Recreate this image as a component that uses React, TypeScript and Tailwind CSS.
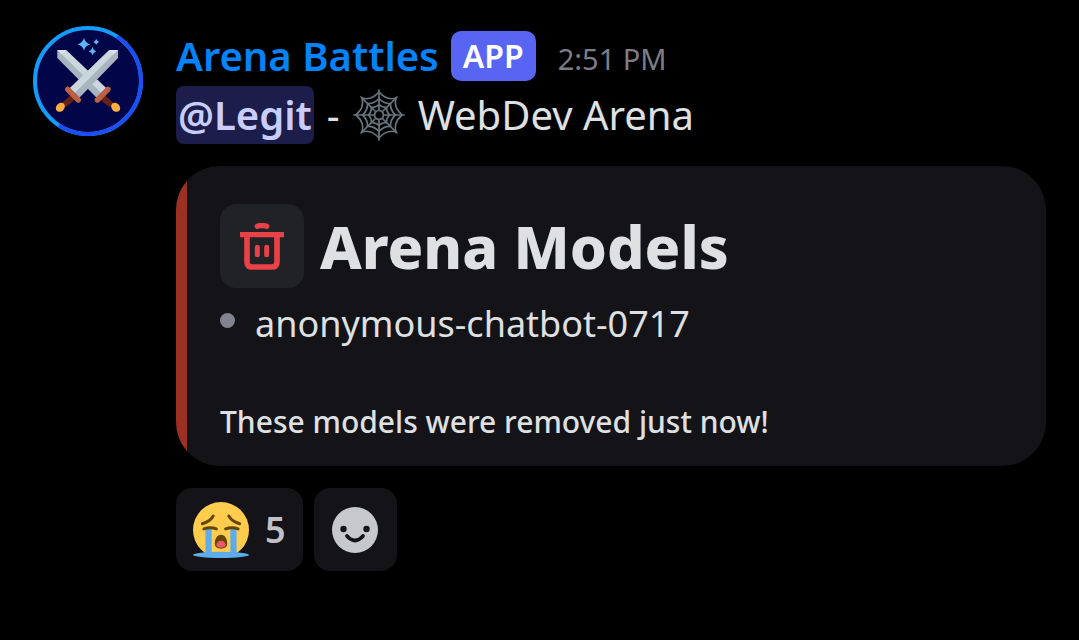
import React from "react";

function Avatar() {
  return (
    <svg viewBox="15 18 330 330" className="size-[110px] shrink-0" role="img" aria-label="Arena Battles avatar">
      <circle cx="180" cy="183" r="159" fill="#020648" stroke="#149cfb" strokeWidth="12" />
      <path d="M267 50A158 158 0 0 1 93 316" fill="none" stroke="#1d4ef5" strokeWidth="12" />
      <g fill="#5db4f8">
        <path d="M168 53Q171 69 187 73Q171 77 168 92Q164 77 148 73Q164 69 168 53Z" />
        <path d="M194 80Q196 91 205 94Q196 97 194 106Q191 97 182 94Q191 91 194 80Z" />
        <path d="M205 57Q207 63 213 66Q207 69 205 74Q202 69 196 66Q202 63 205 57Z" />
      </g>
      <g>
        <path d="M214 237L228 223L257 250L245 262Z" fill="#662113" />
        <path d="M88 90H114L234 204L206 233L88 114Z" fill="#a6b5be" />
        <path d="M114 90L234 204L220 219L98 100L114 90Z" fill="#ccd6dd" />
        <path d="M88 90H114L101 103Z" fill="#dde4e9" />
        <path d="M240 208L208 240" stroke="#be6045" strokeWidth="16" strokeLinecap="round" />
        <ellipse cx="263" cy="262" rx="12" ry="15" transform="rotate(-45 263 262)" fill="#ffac45" />
      </g>
      <g>
        <path d="M144 237L130 223L101 250L113 262Z" fill="#662113" />
        <path d="M270 90H244L126 204L154 233L270 114Z" fill="#a6b5be" />
        <path d="M244 90L126 204L140 219L260 100Z" fill="#ccd6dd" />
        <path d="M270 90H244L257 103Z" fill="#dde4e9" />
        <path d="M119 208L151 240" stroke="#be6045" strokeWidth="16" strokeLinecap="round" />
        <ellipse cx="97" cy="262" rx="12" ry="15" transform="rotate(45 97 262)" fill="#ffac45" />
      </g>
    </svg>
  );
}

function Web() {
  return (
    <svg viewBox="-26 -26 52 52" className="size-[52px] shrink-0" fill="none" stroke="#66757f" strokeWidth="1.700" strokeLinecap="round" role="img" aria-label="Spider web">
      <path d="M0-25V-5M0 5V25M-25 0H-5M5 0H25M-18-18L-4-4M4 4L18 18M18-18L4-4M-4 4L-18 18" />
      <circle r="4.5" />
      <path d="M0-23Q8-14 17-17Q14-8 23 0Q14 8 17 17Q8 14 0 23Q-8 14-17 17Q-14 8-23 0Q-14-8-17-17Q-8-14 0-23Z" />
      <path d="M0-16.500Q5-11 11.500-11.500Q11-5 16.500 0Q11 5 11.500 11.500Q5 11 0 16.500Q-5 11-11.500 11.500Q-11 5-16.500 0Q-11-5-11.500-11.500Q-5-11 0-16.500Z" />
      <path d="M0-10.500Q3-7.500 7.500-7.500Q7.500-3 10.500 0Q7.500 3 7.500 7.500Q3 7.500 0 10.500Q-3 7.500-7.500 7.500Q-7.500 3-10.500 0Q-7.500-3-7.500-7.500Q-3-7.500 0-10.500Z" />
    </svg>
  );
}

function Trash() {
  return (
    <svg viewBox="15 12 252 252" className="size-21" fill="none" stroke="#e84148" aria-hidden="true">
      <path d="M75 104H207" strokeWidth="16" />
      <path d="M96 104V185Q96 201 112 201H170Q186 201 186 185V104" strokeWidth="17" />
      <path d="M127 142V164M155 142V164" strokeWidth="15" strokeLinecap="round" />
      <path d="M127 79Q130 77 136 77H146Q152 77 155 79" strokeWidth="16" strokeLinecap="round" />
    </svg>
  );
}

function Sob() {
  return (
    <svg viewBox="0 0 36 36" className="size-14" role="img" aria-label="Loudly crying face">
      <circle cx="18" cy="18" r="18" fill="#ffcc4d" />
      <ellipse cx="18" cy="34" rx="18" ry="2" fill="#5dadec" />
      <path d="M8 17H12V34H8ZM24 17H28V34H24Z" fill="#5dadec" />
      <path d="M14 27C14 23.500 15.500 21 18 21S22 23.500 22 27C22 31 14 31 14 27Z" fill="#664500" />
      <path d="M15 27.500C15.500 24 20.500 24 21 27.500C21 30 15 30 15 27.500Z" fill="#e8596e" />
      <g fill="none" stroke="#664500" strokeWidth="1.900" strokeLinecap="round">
        <path d="M7 17.300Q11 15.700 15 17.300M21 17.300Q25 15.700 29 17.300" />
        <path d="M6 14Q11 12.500 13 9M30 14Q25 12.500 23 9" />
      </g>
    </svg>
  );
}

function Smile() {
  return (
    <svg viewBox="0 0 46 46" className="size-[46px]" aria-hidden="true">
      <circle cx="23" cy="23" r="23" fill="#c7c8ce" />
      <circle cx="11.500" cy="22" r="3.200" fill="#131318" />
      <circle cx="34.500" cy="22" r="3.200" fill="#131318" />
      <path d="M15 29Q23 38 31 29" fill="none" stroke="#131318" strokeWidth="3.800" strokeLinecap="round" />
    </svg>
  );
}

export default function App() {
  return (
    <main className="min-h-screen bg-black pt-[26px] pr-[33px] pb-16 pl-[33px] font-['Noto_Sans',sans-serif] text-[#dfe0e2]">
      <article className="flex items-start gap-[33px]">
        <Avatar />
        <div className="min-w-0 flex-1">
          <header className="flex h-15 items-center whitespace-nowrap">
            <a href="#profile" className="text-[40px] leading-none font-semibold text-[#0083fb]">Arena Battles</a>
            <span className="ml-3 flex h-[50px] items-center rounded-[10px] bg-[#5865f2] px-3 text-[32px] leading-none font-semibold text-white">APP</span>
            <time className="ml-[22px] pt-1 text-[29px] leading-none text-[#7c7d87]">2:51 PM</time>
          </header>
          <p className="flex h-[58px] items-center text-[40px] leading-none whitespace-nowrap">
            <a href="#legit" className="flex h-[58px] items-center rounded-lg bg-[#1c1d4b] px-0.5 font-semibold text-[#c8cdfb]">@Legit</a>
            <span className="mx-[13px]">-</span>
            <Web />
            <span className="ml-[13px]">WebDev Arena</span>
          </p>
          <section className="mt-[22px] flex overflow-hidden rounded-[44px] bg-[#131318]">
            <div className="w-[11px] shrink-0 bg-[#9c3023]" />
            <div className="px-[33px] pt-[38px] pb-6">
              <div className="flex items-center gap-4">
                <button type="button" aria-label="Remove" className="size-21 shrink-0 rounded-2xl bg-[#212226]">
                  <Trash />
                </button>
                <h1 className="text-[59px] leading-none font-extrabold">Arena Models</h1>
              </div>
              <ul className="mt-2">
                <li className="flex h-14 items-center gap-5 text-[36px] leading-none">
                  <span className="mb-2 size-[15px] rounded-full bg-[#82838f]" />
                  anonymous-chatbot-0717
                </li>
              </ul>
              <p className="mt-[50px] text-[30px] leading-10 font-medium">These models were removed just now!</p>
            </div>
          </section>
          <div className="mt-[22px] flex gap-[11px]">
            <button type="button" className="flex h-[83px] items-center gap-4 rounded-2xl bg-[#131318] px-[17px] text-[36px] leading-none font-semibold text-[#c0c1c6]">
              <Sob />
              5
            </button>
            <button type="button" aria-label="Add reaction" className="flex size-[83px] items-center justify-center rounded-2xl bg-[#131318]">
              <Smile />
            </button>
          </div>
        </div>
      </article>
    </main>
  );
}
